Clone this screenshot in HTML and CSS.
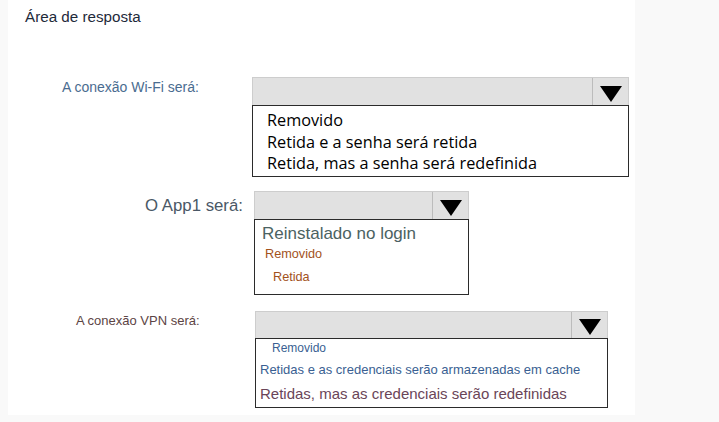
FILE: index.html
```html
<!DOCTYPE html>
<html lang="pt">
<head>
<meta charset="utf-8">
<title>Área de resposta</title>
<link rel="stylesheet" href="styles.css">
</head>
<body>
<div class="panel">
  <div class="title">Área de resposta</div>

  <div class="q q1">
    <div class="label">A conexão Wi-Fi será:</div>
    <div class="dd">
      <div class="bar"><span class="btn"><span class="tri"></span></span></div>
      <ul class="list">
        <li>Removido</li>
        <li>Retida e a senha será retida</li>
        <li>Retida, mas a senha será redefinida</li>
      </ul>
    </div>
  </div>

  <div class="q q2">
    <div class="label">O App1 será:</div>
    <div class="dd">
      <div class="bar"><span class="btn"><span class="tri"></span></span></div>
      <ul class="list">
        <li class="big">Reinstalado no login</li>
        <li class="rm">Removido</li>
        <li class="rt">Retida</li>
      </ul>
    </div>
  </div>

  <div class="q q3">
    <div class="label">A conexão VPN será:</div>
    <div class="dd">
      <div class="bar"><span class="btn"><span class="tri"></span></span></div>
      <ul class="list">
        <li class="rm">Removido</li>
        <li class="cache">Retidas e as credenciais serão armazenadas em cache</li>
        <li class="redef">Retidas, mas as credenciais serão redefinidas</li>
      </ul>
    </div>
  </div>
</div>
</body>
</html>
```

FILE: styles.css
```css
html, body {
  margin: 0;
  padding: 0;
  background: #f9f9f9;
}
body {
  font-family: "Liberation Sans", Arial, sans-serif;
  width: 719px;
  height: 422px;
  overflow: hidden;
}
.panel {
  margin-left: 8px;
  width: 627px;
  height: 415px;
  background: #fff;
  padding-top: 8px;
  box-sizing: border-box;
}
.title {
  padding-left: 17px;
  font-size: 15.2px;
  line-height: 18px;
  color: #1e2a3a;
}
.q {
  display: flex;
  align-items: flex-start;
}
.label {
  box-sizing: border-box;
}
.dd {
  display: flex;
  flex-direction: column;
}
.bar {
  height: 28px;
  box-sizing: border-box;
  background: #e1e1e1;
  border: 1px solid #cdcdcd;
  border-bottom: none;
  display: flex;
  justify-content: flex-end;
}
.btn {
  width: 36px;
  height: 100%;
  border-left: 1px solid #bcbcbc;
  display: flex;
  align-items: flex-end;
  justify-content: center;
  padding-bottom: 3px;
  box-sizing: border-box;
}
.tri {
  width: 0;
  height: 0;
  border-left: 11px solid transparent;
  border-right: 11px solid transparent;
  border-top: 16px solid #000;
}
.list {
  list-style: none;
  margin: 0;
  padding: 0;
  border: 1px solid #2b2b2b;
  background: #fff;
  box-sizing: border-box;
}

/* Question 1 */
.q1 { margin-top: 51px; }
.q1 .label {
  width: 244px;
  padding-left: 54px;
  padding-top: 1px;
  font-size: 14px;
  line-height: 18px;
  color: #4a6c90;
}
.q1 .dd { width: 377px; }
.q1 .list {
  height: 72px;
  padding: 4px 0 0 14px;
  font-family: "Open Sans", "Noto Sans", sans-serif;
  font-size: 16.25px;
  line-height: 21.5px;
  color: #000;
}

/* Question 2 */
.q2 { margin-top: 14px; }
.q2 .label {
  width: 246px;
  padding-left: 137px;
  padding-top: 5px;
  font-size: 16.8px;
  line-height: 20px;
  color: #4a5866;
}
.q2 .dd { width: 215px; }
.q2 .list {
  height: 76px;
  padding: 4px 0 0 7px;
}
.q2 .big {
  font-size: 17px;
  line-height: 20px;
  color: #4b6262;
}
.q2 .rm {
  font-size: 12.7px;
  line-height: 20px;
  color: #a2521c;
  padding-left: 3px;
}
.q2 .rt {
  font-size: 12.7px;
  line-height: 20px;
  color: #a2521c;
  padding-left: 11px;
  margin-top: 3px;
}

/* Question 3 */
.q3 { margin-top: 16px; }
.q3 .label {
  width: 247px;
  padding-left: 68px;
  padding-top: 1px;
  font-size: 13px;
  line-height: 18px;
  color: #5c4444;
}
.q3 .dd { width: 353px; }
.q3 .bar { height: 27px; }
.q3 .list {
  height: 70px;
  padding: 0 0 0 4px;
}
.q3 .rm {
  font-size: 12px;
  line-height: 19px;
  color: #3a5f92;
  padding-left: 12px;
}
.q3 .cache {
  font-size: 13px;
  line-height: 24px;
  color: #3a5f92;
}
.q3 .redef {
  font-size: 15px;
  line-height: 24px;
  color: #6a4558;
}
```
